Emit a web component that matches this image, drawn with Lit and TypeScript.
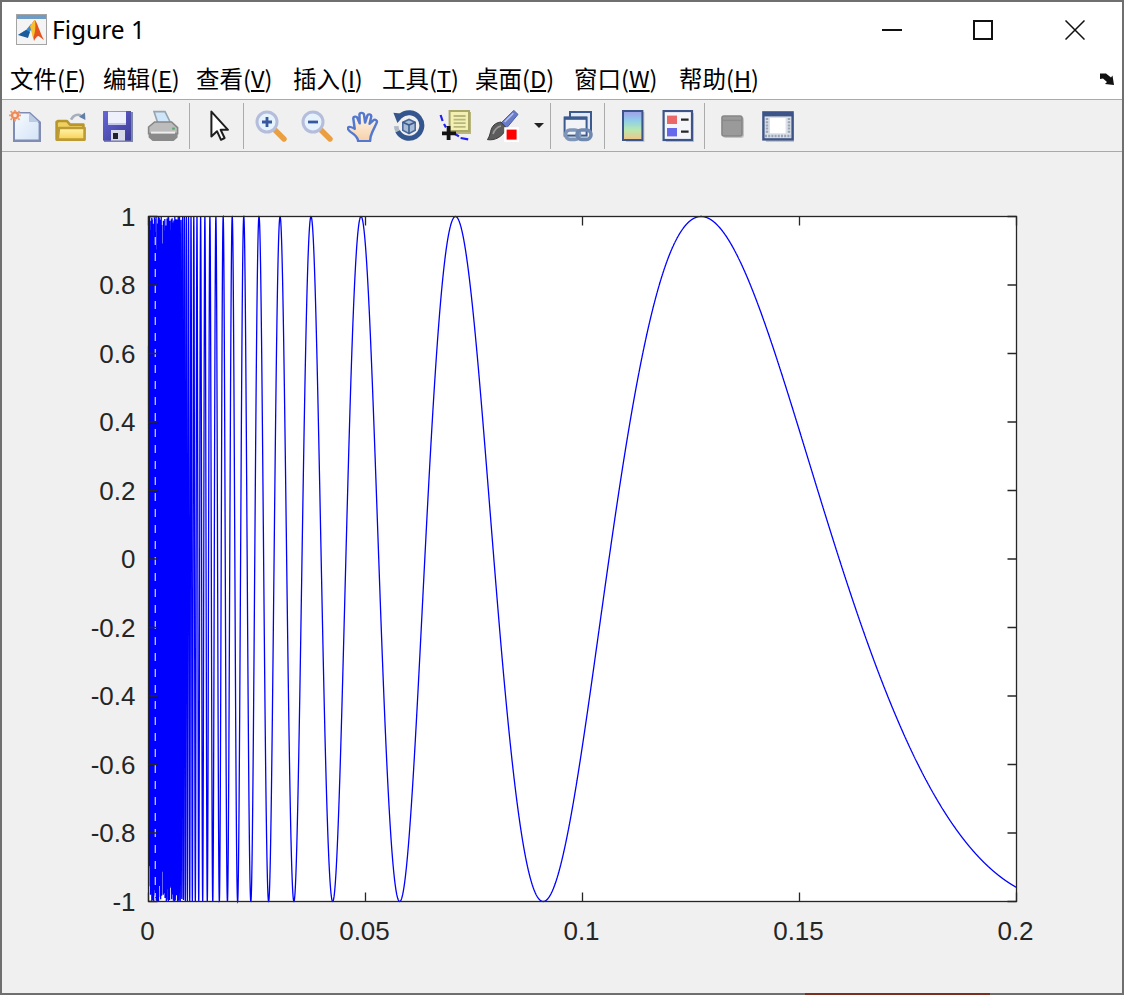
import {LitElement, css, html, svg} from "lit";
import {customElement} from "lit/decorators.js";

// label, access key, closing bracket, slot width
const menus: [string, string, string, number][] = [
    ["文件(", "F", ")", 93],
    ["编辑(", "E", ")", 93],
    ["查看(", "V", ")", 97],
    ["插入(", "I", ")", 89],
    ["工具(", "T", ")", 93],
    ["桌面(", "D", ")", 99],
    ["窗口(", "W", ")", 105],
    ["帮助(", "H", ")", 90],
];

// toolbar icons, all on matlab's 16px grid
const icons = {
    newFile: svg`
        <defs>
            <linearGradient id="pg" x1="0" y1="0" x2="1" y2="1">
                <stop offset="0" stop-color="#f6fafe"/>
                <stop offset="1" stop-color="#d4e4f8"/>
            </linearGradient>
        </defs>
        <path d="M2 1h8.500l5.500 5v10h-14z" fill="#7f8cb4"/>
        <path d="M3 1.800h7l4.800 4.700v8.200h-11.800z" fill="url(#pg)"/>
        <path d="M10 1.500v4.500h5z" fill="#bccbe4"/>
        <circle cx="3" cy="2.700" r="1.500" fill="#fbe6d4" stroke="#ee8a58" stroke-width="1.200"/>
        <path d="M3 0v1M3 4.600v1.200M0 2.700h1M5 2.700h1M.8.600l.7.7M4.600 4.200l.7.7M5.300.6l-.7.7M.8 4.900l.7-.7" stroke="#ee9a70" stroke-width=".9"/>`,
    open: svg`
        <defs>
            <linearGradient id="fg" x1="0" y1="0" x2="0" y2="1">
                <stop offset="0" stop-color="#fff6b0"/>
                <stop offset="1" stop-color="#f8d050"/>
            </linearGradient>
        </defs>
        <path d="M.8 6v8.800h13.400v-7.500h-6.700l-1.500-1.800h-4.300z" fill="#f0d060" stroke="#b8962e" stroke-width="1.300" stroke-linejoin="round"/>
        <path d="M2 9h12.800v5.800h-13.500z" fill="url(#fg)" stroke="#bc9a34" stroke-width="1.300" stroke-linejoin="round"/>
        <path d="M8 4.800c1.200-2 3.200-3 5-2" fill="none" stroke="#a6b0bc" stroke-width="1.400"/>
        <path d="M15.200 5l-.2-3.800-3 2.200z" fill="#5f7fa8"/>`,
    save: svg`
        <defs>
            <linearGradient id="sg" x1="0" y1="0" x2="1" y2="1">
                <stop offset="0" stop-color="#6666d8"/>
                <stop offset="1" stop-color="#3c3c94"/>
            </linearGradient>
        </defs>
        <rect x="1.500" y="1" width="14.500" height="15" fill="#7c86a8"/>
        <rect x="1" y=".5" width="14" height="14.800" fill="url(#sg)"/>
        <rect x="3.500" y=".8" width="9" height="6.700" fill="#eef0fc"/>
        <rect x="3.500" y="6.500" width="9" height="1" fill="#c4c8e8"/>
        <rect x="5" y="10" width="7" height="5.300" fill="#d8dae8"/>
        <rect x="6" y="11.500" width="2.500" height="3" fill="#22222c"/>`,
    print: svg`
        <path d="M3.500 .8h5.500l3 6h-6.500z" fill="#cfe6fa" stroke="#96a4ae" stroke-width=".8"/>
        <path d="M.8 8.500l3-2.500h8.500l3 2.800v3h-14.500z" fill="#bcbcbc" stroke="#868686" stroke-width=".8"/>
        <path d="M.8 11.500h14.500v2.300l-2 1.700h-10.500l-2-1.700z" fill="#8a8a8a"/>
        <path d="M2 11.300h12" stroke="#eeeeee" stroke-width="1"/>
        <rect x="12.600" y="8.800" width="1.300" height="1" fill="#58a868"/>`,
    arrow: svg`
        <path d="M3.700 .8v12.400l2.800-2.600 2 4.300 1.800-.9-2-4.100h3.700z" fill="#fff" stroke="#1e1e1e" stroke-width="1" stroke-linejoin="round"/>`,
    zoomIn: svg`
        <path d="M9.500 9.500l5 5" stroke="#eaa040" stroke-width="2.700" stroke-linecap="round"/>
        <circle cx="6" cy="6" r="5" fill="#e6f2fc" stroke="#b4bedc" stroke-width="1.500"/>
        <path d="M3.500 6h5M6 3.500v5" stroke="#38589e" stroke-width="1.400"/>`,
    zoomOut: svg`
        <path d="M9.500 9.500l5 5" stroke="#eaa040" stroke-width="2.700" stroke-linecap="round"/>
        <circle cx="6" cy="6" r="5" fill="#e6f2fc" stroke="#b4bedc" stroke-width="1.500"/>
        <path d="M3.500 6h5" stroke="#38589e" stroke-width="1.400"/>`,
    hand: svg`
        <defs>
            <linearGradient id="hg" x1="0" y1="0" x2="0" y2="1">
                <stop offset="0" stop-color="#fffaf0"/>
                <stop offset="1" stop-color="#f6d0a8"/>
            </linearGradient>
        </defs>
        <path transform="translate(-.1 0) scale(1.130 1)" d="M5 15.500c0-1.500-1-2.500-2-3.500-1-.8-2.800-2-2.500-3 .3-1 1.800-.4 3 .4l-.6-5c-.2-1.300 1.400-1.500 1.800-.4l1 2.700-.1-4.400c0-1.200 1.800-1.200 2 0l.5 4 1-3.500c.3-1.100 1.900-.7 1.700.5l-.7 3.600 1.600-1.700c.8-.8 2 0 1.500 1.200l-1.700 4.100c-.6 1.500-1.200 2.500-1.200 5z" fill="url(#hg)" stroke="#5478d0" stroke-width="1.100" stroke-linejoin="round"/>`,
    rotate: svg`
        <path d="M3.700 3a6.400 6.400 0 1 1-1.400 7.600" fill="none" stroke="#34568f" stroke-width="2.500"/>
        <path d="M2.300 10.600a6.400 6.400 0 0 1-.7-2.500" fill="none" stroke="#b0b8c4" stroke-width="2.300"/>
        <path d="M.2 1.400l6 .6-4 4.500z" fill="#34568f"/>
        <path d="M4.900 6.100l3.100-1.400 3.100 1.400v4l-3.100 1.700-3.100-1.700z" fill="#a8bcd4" stroke="#4a6a9c" stroke-width=".8"/>
        <path d="M4.900 6.100l3.100 1.400 3.100-1.400M8 7.500v4.300" fill="none" stroke="#3c5c90" stroke-width=".8"/>`,
    cursor: svg`
        <rect x="6" y="1" width="10" height="11" fill="#b8b67c"/>
        <rect x="5.300" y=".5" width="9.700" height="10" fill="#f4f0b4" stroke="#aaa868" stroke-width="1"/>
        <path d="M7.300 3h6M7.300 4.800h6M7.300 6.600h6M7.300 8.400h6" stroke="#b8b67c" stroke-width=".9"/>
        <path d="M.8 2.500l1 3M2.500 7l1 1.700M8 12l2 1.200M10.800 14l3.800 .7" stroke="#2020f4" stroke-width="1.100" fill="none"/>
        <path d="M4.800 8v7M1.500 11.700h7" stroke="#141414" stroke-width="1.900"/>`,
    brush: svg`
        <path d="M7 6.500l6.400-6.300 2.100 2-5.700 6.800z" fill="#6a7cc8" stroke="#4a5ca8" stroke-width=".5"/>
        <path d="M8.800 6l4.400-4.400" stroke="#b4c0ec" stroke-width=".8"/>
        <path d="M7 6c-3 .4-4.600 2-5.200 4.800-.4 1.600-.8 3-1.600 4 3.500.6 7.700-1.200 9.500-5.800z" fill="#5c5c5c" stroke="#3a3a3a" stroke-width=".5"/>
        <path d="M3 12c.7-2 2-3.500 4-4" stroke="#9c9c9c" stroke-width=".8" fill="none"/>
        <rect x="8.600" y="8.600" width="7.400" height="7.400" fill="#fff"/>
        <rect x="9.800" y="9.800" width="5" height="5" fill="#f00"/>`,
    link: svg`
        <rect x="4" y="1" width="10.500" height="9.500" fill="#e4e8f2" stroke="#3a5a90"/>
        <rect x="1.300" y="3.800" width="11" height="9" fill="#f2f3f6" stroke="#3a5a90"/>
        <rect x="1" y="3.300" width="11.500" height="1.600" fill="#3a5a90"/>
        <rect x="1.800" y="10" width="7" height="4.700" rx="2.300" fill="none" stroke="#8096b8" stroke-width="1.800"/>
        <rect x="7.500" y="10" width="7" height="4.700" rx="2.300" fill="none" stroke="#6e88b0" stroke-width="1.800"/>`,
    colorbar: svg`
        <defs>
            <linearGradient id="cb" x1="0" y1="0" x2="0" y2="1">
                <stop offset="0" stop-color="#a09ce8"/>
                <stop offset=".35" stop-color="#90d0e8"/>
                <stop offset=".65" stop-color="#b8e8b0"/>
                <stop offset="1" stop-color="#f4c484"/>
            </linearGradient>
        </defs>
        <rect x="5" y="1" width="9.200" height="15" fill="#a8a8a8" opacity=".6"/>
        <rect x="3.500" y=".5" width="9.700" height="14.500" fill="url(#cb)" stroke="#3c5488"/>`,
    legend: svg`
        <rect x="2" y="1.500" width="14" height="14.500" fill="#a8a8a8" opacity=".6"/>
        <rect x=".8" y=".5" width="14.200" height="14.500" fill="#f4f6fa" stroke="#3c5488" stroke-width="1.100"/>
        <rect x="2.500" y="2.800" width="5" height="4.200" fill="#ea6868"/>
        <rect x="2.500" y="9" width="5" height="4.200" fill="#6868ea"/>
        <path d="M9.500 4.800h3.800M9.500 10.800h3.800" stroke="#282828" stroke-width="1.200"/>`,
    hide: svg`
        <rect x="3.500" y="3.500" width="10.500" height="10.500" rx="1.200" fill="#c4c4c4"/>
        <rect x="3" y="3" width="10" height="10" rx="1" fill="#9a9a9a" stroke="#868686" stroke-width=".8"/>
        <path d="M3.500 5.200h9" stroke="#8a8a8a" stroke-width=".7"/>`,
    tools: svg`
        <rect x="2" y="2" width="14" height="14" fill="#a8a8a8" opacity=".6"/>
        <rect x=".7" y="1.200" width="14.600" height="13.500" fill="#dadfe8" stroke="#3c5488" stroke-width="1.200"/>
        <rect x=".7" y="1.200" width="14.600" height="2" fill="#3c5488"/>
        <rect x="4" y="4" width="7.800" height="7.600" fill="#fff"/>
        <path d="M2.500 4v8M13.500 4v8M1.500 13h13" stroke="#9aa4b4" stroke-width="1.200" stroke-dasharray="1 .6" fill="none"/>`,
};

@customElement("app-root")
export class AppRoot extends LitElement {
    static styles = css`
        :host {
            display: block;
            width: 1124px;
            height: 995px;
            font-family: "Open Sans", "Noto Sans CJK SC", sans-serif;
            overflow: hidden;
        }

        .window {
            position: relative;
            box-sizing: border-box;
            width: 1124px;
            height: 995px;
            border: 2px solid #6f6f6f;
            background: #f0f0f0;
            display: flex;
            flex-direction: column;
        }

        /* a sliver of whatever sat behind the window when it was captured */
        .behind {
            position: absolute;
            left: 803px;
            bottom: -2px;
            width: 185px;
            height: 2px;
            background: #7a3020;
        }

        .titlebar {
            height: 60px;
            box-sizing: border-box;
            padding: 0 0 5px 14px;
            flex: none;
            background: #fff;
            display: flex;
            align-items: center;
            font-family: "Noto Sans", sans-serif;
            font-size: 24.500px;
            color: #000;
        }

        .logo {
            width: 32px;
            height: 32px;
            margin-right: 4px;
            filter: blur(0.4px);
        }

        .title {
            flex: 1;
        }

        .win-btn {
            width: 92px;
            height: 55px;
            display: flex;
            align-items: center;
            justify-content: center;
        }

        .win-btn.min {
            width: 88px;
        }

        .win-btn.max {
            width: 93px;
        }

        .win-btn.close {
            margin-right: 1px;
        }

        .menubar {
            height: 38px;
            box-sizing: border-box;
            padding: 0 0 6px 8px;
            flex: none;
            background: #fff;
            display: flex;
            align-items: center;
            font-family: "Noto Sans CJK SC", sans-serif;
            font-size: 23.500px;
            color: #000;
            border-bottom: 1px solid #a9a9a9;
            white-space: nowrap;
        }

        .menubar u {
            text-underline-offset: 2px;
        }

        .dock {
            margin-left: auto;
            margin-right: 7px;
            width: 16px;
            height: 16px;
            margin-top: 3px;
        }

        .toolbar {
            height: 52px;
            flex: none;
            box-sizing: border-box;
            display: flex;
            align-items: center;
            border-bottom: 1px solid #a9a9a9;
        }

        .tool {
            width: 46px;
            height: 32px;
            flex: none;
            display: flex;
            justify-content: center;
        }

        .tool svg {
            width: 32px;
            height: 32px;
            filter: blur(0.55px);
        }

        .tool.wide {
            width: 50px;
        }

        .caret {
            width: 0;
            height: 0;
            margin: 0 6px 0 6px;
            border-left: 5px solid transparent;
            border-right: 5px solid transparent;
            border-top: 5px solid #222;
        }

        .sep {
            width: 1px;
            height: 46px;
            flex: none;
            background: #ababab;
            margin: 0 4px 0 3px;
        }

        .sep.first {
            margin: 0 7px 0 3px;
        }

        .sep.flush {
            margin-left: 0;
        }

        .figure {
            flex: 1;
            min-height: 0;
        }

        .figure svg {
            display: block;
        }

        .tick-label {
            font-family: "Liberation Sans", sans-serif;
            font-size: 26px;
            fill: #262626;
        }
    `;

    // the plotted curve: y = sin(1/x), sampled finely enough to fill in near zero
    private curve() {
        const left = 146.5, right = 1014.5, top = 64.5, bottom = 749.5;
        const step = 1.63e-5;
        const parts: string[] = [];
        for (let i = 1; i * step <= 0.2; i++) {
            const x = i * step;
            const px = left + (x / 0.2) * (right - left);
            const py = (top + bottom) / 2 - Math.sin(1 / x) * (bottom - top) / 2;
            parts.push(`${i === 1 ? "M" : "L"}${px.toFixed(2)} ${py.toFixed(2)}`);
        }
        return parts.join("");
    }

    private axes() {
        const left = 146.5, right = 1014.5, top = 64.5, bottom = 749.5;
        const yTicks = ["1", "0.8", "0.6", "0.4", "0.2", "0", "-0.2", "-0.4", "-0.6", "-0.8", "-1"];
        const xTicks = ["0", "0.05", "0.1", "0.15", "0.2"];
        const ys = yTicks.map((_, i) => top + (i * (bottom - top)) / 10);
        const xs = xTicks.map((_, i) => left + (i * (right - left)) / 4);
        return svg`
            <rect x=${left} y=${top} width=${right - left} height=${bottom - top} fill="#fff"/>
            <path d=${this.curve()} fill="none" stroke="#00f" stroke-width="1.300"/>
            <path d="M153.300 85V745" stroke="#c4c4ec" stroke-width="1.300" stroke-dasharray="8 8"/>
            <rect x=${left} y=${top} width=${right - left} height=${bottom - top} fill="none" stroke="#262626" stroke-width="1.300"/>
            ${ys.map((y) => svg`<path d="M${left} ${y}h9M${right} ${y}h-9" stroke="#262626" stroke-width="1.300"/>`)}
            ${xs.map((x) => svg`<path d="M${x} ${bottom}v-9M${x} ${top}v9" stroke="#262626" stroke-width="1.300"/>`)}
            ${yTicks.map((t, i) => svg`<text class="tick-label" x="133.500" y=${ys[i] + 9} text-anchor="end">${t}</text>`)}
            ${xTicks.map((t, i) => svg`<text class="tick-label" x=${xs[i] - 1} y="788" text-anchor="middle">${t}</text>`)}
        `;
    }

    private tool(icon: unknown, wide = false) {
        return html`<div class="tool ${wide ? "wide" : ""}"><svg viewBox="0 0 16 16">${icon}</svg></div>`;
    }

    render() {
        return html`
            <div class="window">
                <div class="titlebar">
                    <svg class="logo" viewBox="0 0 32 32">
                        <rect x=".5" y=".5" width="30" height="30" fill="#f4f4f4" stroke="#a4a4a4"/>
                        <rect x="1" y="1" width="29" height="4" fill="#6e9cc4"/>
                        <path d="M2 21l8-5 5-6 3 2-6 8z" fill="#3a8ccc"/>
                        <path d="M12 24l-10-3 8-5 4 2z" fill="#1c5c9c"/>
                        <path d="M14 12c2-2 3-5 5-6 2 2 5 13 9 20-3-2-5-4-6-4-2 1-3 3-4 5-1-5-2-10-4-15z" fill="#e4541c"/>
                        <path d="M19 6c-2 1-3 4-5 6l3 12c2-4 3-11 2-18z" fill="#f6c030"/>
                    </svg>
                    <span class="title">Figure 1</span>
                    <div class="win-btn min">
                        <svg width="20" height="20" viewBox="0 0 20 20"><path d="M0 10h20" stroke="#111" stroke-width="2"/></svg>
                    </div>
                    <div class="win-btn max">
                        <svg width="20" height="20" viewBox="0 0 20 20"><rect x="1" y="1" width="18" height="18" fill="none" stroke="#111" stroke-width="2"/></svg>
                    </div>
                    <div class="win-btn close">
                        <svg width="20" height="20" viewBox="0 0 20 20"><path d="M.5 .5l19 19M19.500 .5l-19 19" stroke="#111" stroke-width="1.500"/></svg>
                    </div>
                </div>
                <div class="menubar">
                    ${menus.map(([a, k, b, w]) => html`<span style="width:${w}px">${a}<u>${k}</u>${b}</span>`)}
                    <svg class="dock" viewBox="0 0 16 16"><path d="M1 2.500h6l5 4 1.500-2 1.500 9.500-9-1 2-2-4-3.500-3 .5z" fill="#111"/></svg>
                </div>
                <div class="toolbar">
                    ${this.tool(icons.newFile)}
                    ${this.tool(icons.open)}
                    ${this.tool(icons.save)}
                    ${this.tool(icons.print)}
                    <div class="sep first"></div>
                    ${this.tool(icons.arrow)}
                    <div class="sep flush"></div>
                    ${this.tool(icons.zoomIn)}
                    ${this.tool(icons.zoomOut)}
                    ${this.tool(icons.hand)}
                    ${this.tool(icons.rotate)}
                    ${this.tool(icons.cursor)}
                    ${this.tool(icons.brush, true)}
                    <div class="caret"></div>
                    <div class="sep flush"></div>
                    ${this.tool(icons.link)}
                    <div class="sep"></div>
                    ${this.tool(icons.colorbar)}
                    ${this.tool(icons.legend)}
                    <div class="sep"></div>
                    ${this.tool(icons.hide)}
                    ${this.tool(icons.tools)}
                </div>
                <div class="figure">
                    <svg width="1120" height="841" viewBox="0 0 1120 841">${this.axes()}</svg>
                </div>
                <div class="behind"></div>
            </div>
        `;
    }
}
